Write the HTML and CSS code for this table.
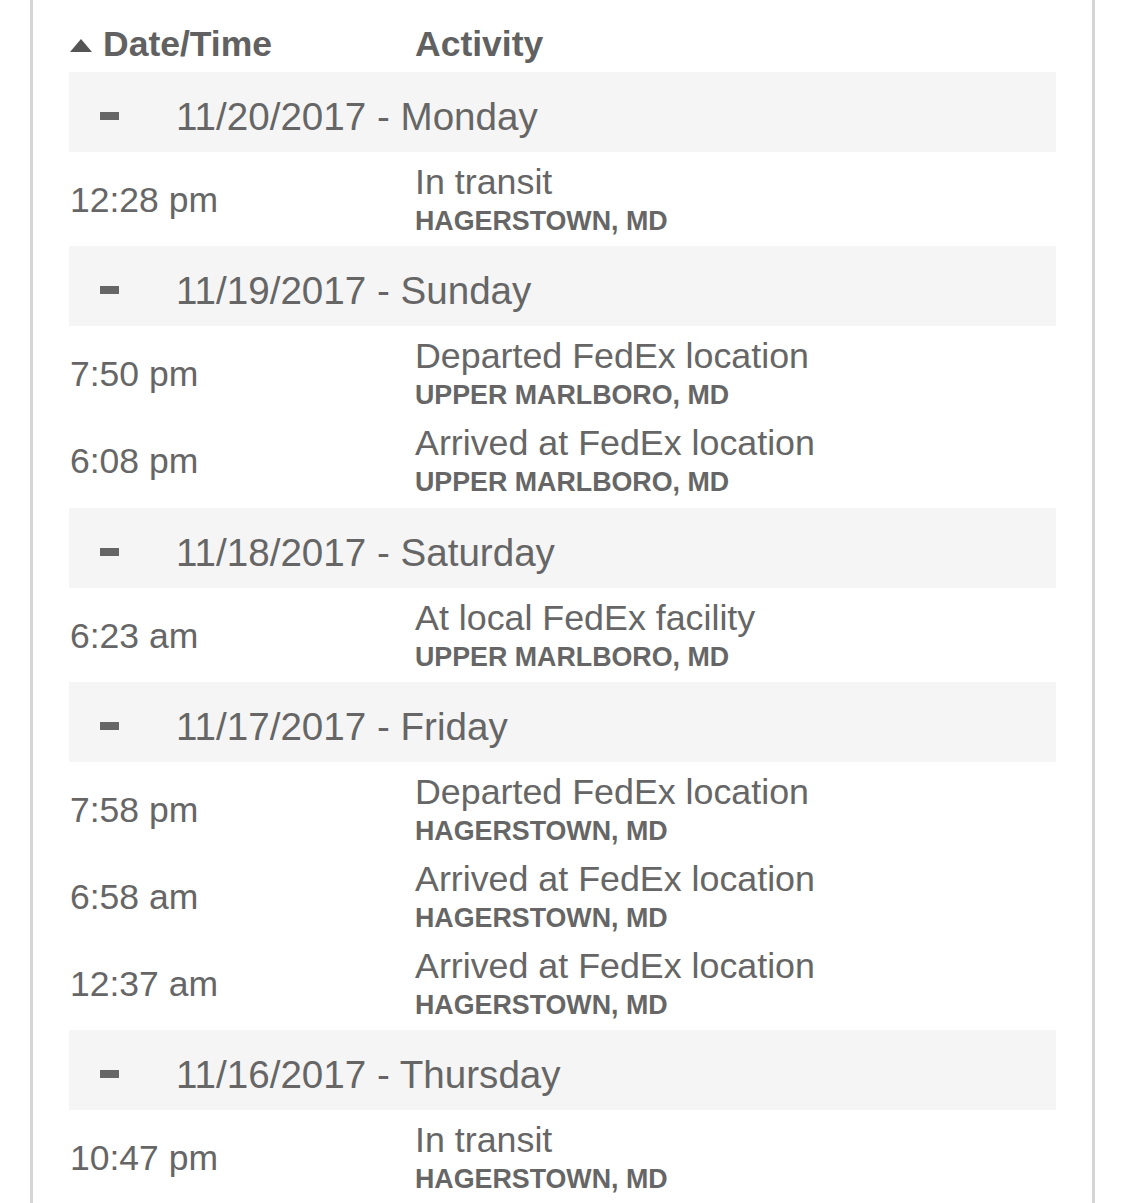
FILE: index.html
```html
<!DOCTYPE html>
<html lang="en">
<head>
<meta charset="utf-8">
<title>Shipment travel history</title>
<link rel="stylesheet" href="styles.css">
</head>
<body>
<div class="panel">
  <div class="history">
    <div class="head">
      <div class="head-date"><span class="sort-up"></span>Date/Time</div>
      <div class="head-act">Activity</div>
    </div>

    <section class="group">
      <div class="day"><span class="collapse"></span>11/20/2017 - Monday</div>
      <div class="event">
        <div class="time">12:28 pm</div>
        <div class="act"><div class="desc">In transit</div><div class="loc">HAGERSTOWN, MD</div></div>
      </div>
    </section>

    <section class="group">
      <div class="day"><span class="collapse"></span>11/19/2017 - Sunday</div>
      <div class="event">
        <div class="time">7:50 pm</div>
        <div class="act"><div class="desc">Departed FedEx location</div><div class="loc">UPPER MARLBORO, MD</div></div>
      </div>
      <div class="event">
        <div class="time">6:08 pm</div>
        <div class="act"><div class="desc">Arrived at FedEx location</div><div class="loc">UPPER MARLBORO, MD</div></div>
      </div>
    </section>

    <section class="group">
      <div class="day"><span class="collapse"></span>11/18/2017 - Saturday</div>
      <div class="event">
        <div class="time">6:23 am</div>
        <div class="act"><div class="desc">At local FedEx facility</div><div class="loc">UPPER MARLBORO, MD</div></div>
      </div>
    </section>

    <section class="group">
      <div class="day"><span class="collapse"></span>11/17/2017 - Friday</div>
      <div class="event">
        <div class="time">7:58 pm</div>
        <div class="act"><div class="desc">Departed FedEx location</div><div class="loc">HAGERSTOWN, MD</div></div>
      </div>
      <div class="event">
        <div class="time">6:58 am</div>
        <div class="act"><div class="desc">Arrived at FedEx location</div><div class="loc">HAGERSTOWN, MD</div></div>
      </div>
      <div class="event">
        <div class="time">12:37 am</div>
        <div class="act"><div class="desc">Arrived at FedEx location</div><div class="loc">HAGERSTOWN, MD</div></div>
      </div>
    </section>

    <section class="group">
      <div class="day"><span class="collapse"></span>11/16/2017 - Thursday</div>
      <div class="event">
        <div class="time">10:47 pm</div>
        <div class="act"><div class="desc">In transit</div><div class="loc">HAGERSTOWN, MD</div></div>
      </div>
    </section>
  </div>
</div>
</body>
</html>
```

FILE: styles.css
```css
html, body {
  margin: 0;
  padding: 0;
  background: #ffffff;
}

body {
  font-family: "Liberation Sans", Arial, Helvetica, sans-serif;
  color: #666666;
  overflow: hidden;
}

.panel {
  margin-left: 30px;
  width: 1059px;
  min-height: 1203px;
  border-left: 3px solid #d5d5d5;
  border-right: 3px solid #d5d5d5;
  background: #ffffff;
}

.history {
  padding: 0 36px;
}

.head {
  display: grid;
  grid-template-columns: 346px 1fr;
  height: 72px;
  box-sizing: border-box;
  padding-top: 24px;
  font-weight: bold;
  font-size: 35.5px;
  line-height: 40px;
  color: #616161;
}

.head-date {
  white-space: nowrap;
}

.sort-up {
  display: inline-block;
  width: 0;
  height: 0;
  margin-left: 1px;
  margin-right: 11px;
  border-left: 11.5px solid transparent;
  border-right: 11.5px solid transparent;
  border-bottom: 13px solid #555555;
  vertical-align: 4px;
}

.group {
  padding-bottom: 7.3px;
}

.day {
  display: flex;
  align-items: flex-start;
  height: 80px;
  box-sizing: border-box;
  padding: 10px 0 0 31px;
  background: #f5f5f5;
  font-size: 38.6px;
  line-height: 70px;
  white-space: nowrap;
}

.collapse {
  flex: none;
  width: 19px;
  height: 8px;
  margin-top: 30px;
  margin-right: 57px;
  background: #666666;
}

.event {
  display: grid;
  grid-template-columns: 346px 1fr;
  height: 87px;
  box-sizing: border-box;
  padding-top: 10px;
}

.time {
  padding-top: 18px;
  padding-left: 1px;
  font-size: 35.5px;
  line-height: 41px;
  white-space: nowrap;
}

.desc {
  font-size: 35.8px;
  line-height: 41px;
  white-space: nowrap;
}

.loc {
  font-size: 26.8px;
  font-weight: bold;
  line-height: 36px;
  white-space: nowrap;
}
```
